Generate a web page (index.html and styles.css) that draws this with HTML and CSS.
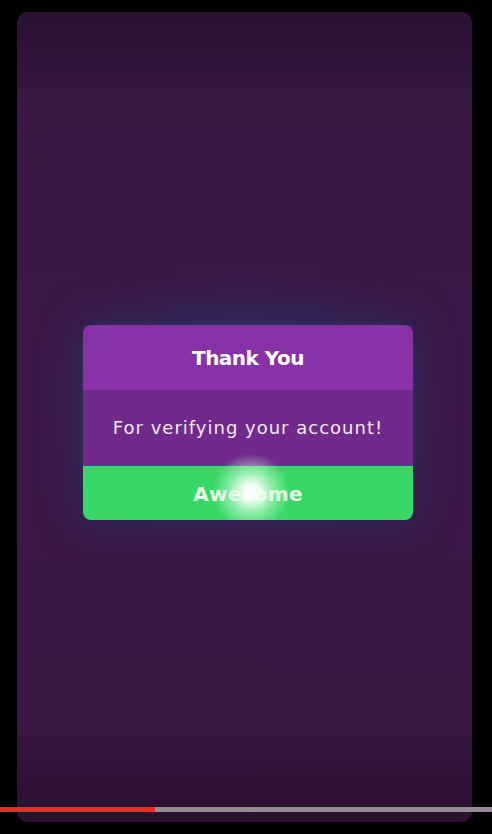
FILE: index.html
```html
<!DOCTYPE html>
<html>
<head>
<meta charset="utf-8">
<link rel="stylesheet" href="styles.css">
</head>
<body>
<div class="frame">
  <div class="screen">
    <div class="dialog">
      <div class="dlg-head">Thank You</div>
      <div class="dlg-body">For verifying your account!</div>
      <div class="dlg-btn">Awesome<span class="touch"></span></div>
    </div>
  </div>
  <div class="progress"><div class="played"></div></div>
</div>
</body>
</html>
```
FILE: styles.css
```css
html, body {
  margin: 0;
  padding: 0;
  background: #000;
}
.frame {
  position: relative;
  width: 492px;
  height: 834px;
  padding: 12px 20px 12px 17px;
  box-sizing: border-box;
}
.screen {
  height: 810px;
  border-radius: 10px;
  background:
    radial-gradient(ellipse 200px 140px at 50% 48%, rgba(40,60,110,0.5), rgba(40,60,110,0) 100%),
    linear-gradient(180deg, #2a1131 0%, #381843 12%, #3c1849 50%, #381742 88%, #2a0f2f 100%);
  display: flex;
  align-items: center;
  justify-content: center;
  padding: 10px 0 0 7px;
  box-sizing: border-box;
}
.dialog {
  width: 330px;
  border-radius: 8px;
  overflow: hidden;
  font-family: "DejaVu Sans", sans-serif;
  color: #fff;
  text-align: center;
  box-shadow: 0 0 40px 6px rgba(30, 70, 120, 0.4);
}
.dlg-head {
  background: #8732a7;
  height: 65px;
  line-height: 66px;
  font-size: 20px;
  font-weight: bold;
  letter-spacing: -0.5px;
}
.dlg-body {
  background: #6f2a8c;
  height: 76px;
  line-height: 76px;
  font-size: 18px;
  color: #f3e8f5;
  letter-spacing: 1px;
}
.dlg-btn {
  position: relative;
  background: #38d867;
  height: 54px;
  line-height: 56px;
  font-size: 20px;
  font-weight: bold;
  color: #eafbe9;
  letter-spacing: 0.3px;
}
.touch {
  position: absolute;
  left: 128px;
  top: -14px;
  width: 80px;
  height: 80px;
  border-radius: 50%;
  background: radial-gradient(circle, rgba(255,255,255,1) 0%, rgba(245,255,245,0.95) 15%, rgba(210,255,220,0.5) 40%, rgba(200,255,210,0) 68%);
}
.progress {
  position: absolute;
  left: 0;
  top: 807px;
  width: 492px;
  height: 5px;
  background: #948b94;
}
.played {
  width: 155px;
  height: 5px;
  background: #f12b24;
}
```
